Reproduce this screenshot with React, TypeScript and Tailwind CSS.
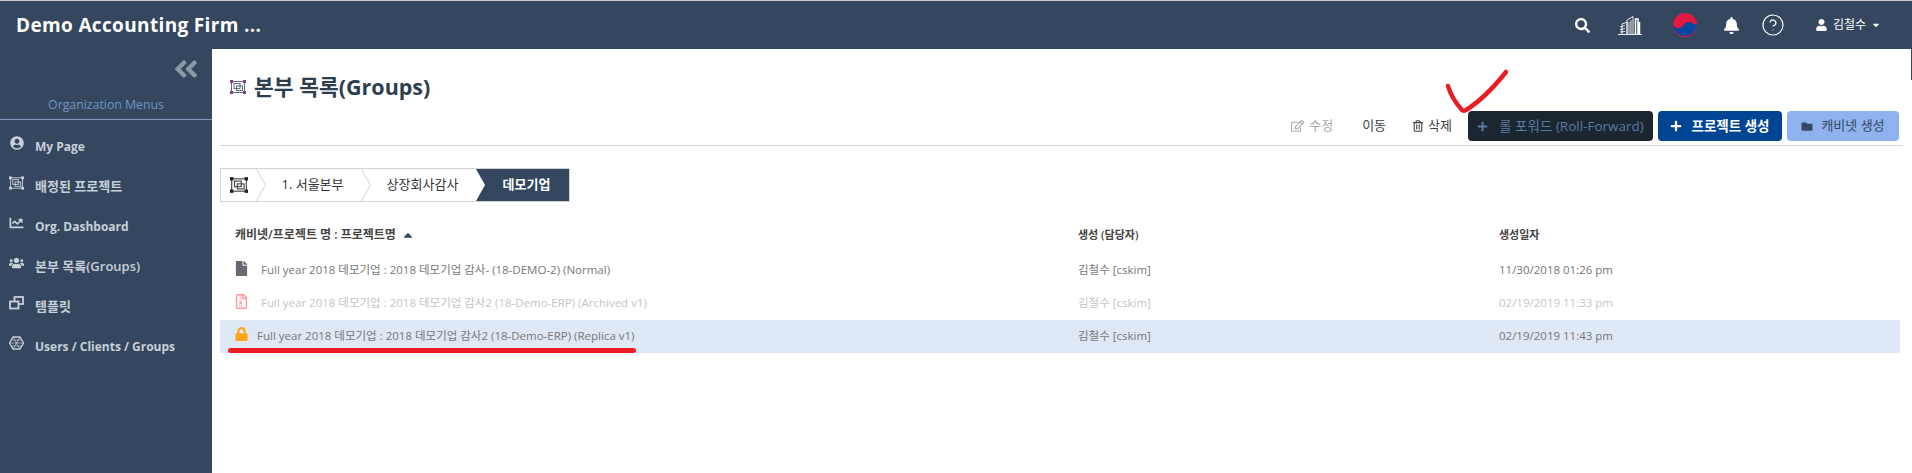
import { CircleHelp } from 'lucide-react'
import {
  FaAngleDoubleLeft,
  FaBell,
  FaCaretDown,
  FaCaretUp,
  FaChartLine,
  FaFile,
  FaFolder,
  FaLock,
  FaPlus,
  FaRegEdit,
  FaRegFileArchive,
  FaRegTrashAlt,
  FaSearch,
  FaUser,
  FaUserCircle,
  FaUsers,
} from 'react-icons/fa'

function GroupIcon({ className, handle, line }: { className: string; handle: string; line: string }) {
  return (
    <svg viewBox="0 0 16 14" className={className} fill="none">
      <rect x="1.5" y="1.5" width="13" height="11" stroke={line} strokeWidth="1" />
      <rect x="4" y="3.5" width="6" height="5" stroke={line} strokeWidth="1" />
      <rect x="6.5" y="6" width="6" height="4.5" stroke={line} strokeWidth="1" />
      {[[0, 0], [13, 0], [0, 11], [13, 11]].map(([x, y]) => (
        <rect key={`${x}-${y}`} x={x} y={y} width="3" height="3" fill={handle} />
      ))}
    </svg>
  )
}

function CloneIcon() {
  return (
    <svg viewBox="0 0 15 14" className="w-[15px] h-[14px]" fill="none" stroke="#c8d0d9" strokeWidth="1.8">
      <rect x="5.5" y="1" width="8.5" height="7" />
      <rect x="1" y="5.5" width="8.5" height="7" fill="#34475e" />
    </svg>
  )
}

function NetworkIcon() {
  return (
    <svg viewBox="0 0 15 14" className="w-[15px] h-[14px]" fill="none" stroke="#c8d0d9" strokeWidth="1">
      <path d="M4 1h7l3.500 6L11 13H4L.5 7z" strokeWidth="1.300" />
      <path d="M4 1l7 12M11 1L4 13M.5 7h14M2.500 4h10M2.500 10h10" strokeWidth=".7" />
    </svg>
  )
}

function BuildingIcon() {
  return (
    <svg viewBox="0 0 24 19" className="w-6 h-[19px]" fill="none" stroke="#fff" strokeWidth=".9">
      <path d="M0 18.500h24" />
      <path d="M4 18V8l5-2v12M2 11l5-1.500M2 13.500l5-1M2 16l5-.5" />
      <path d="M9 18V4l6-3.500V18" />
      <path d="M17.500 18V3h2.500v15M21.500 18V6" strokeWidth="1.500" />
      <path d="M11 6v12M13 4v14" />
    </svg>
  )
}

function KoreaFlag() {
  return (
    <svg viewBox="0 0 24 24" className="w-6 h-6">
      <circle cx="12" cy="12" r="12" fill="#e4173e" />
      <path d="M0 11c1 4 5 5 8 3.500s3.500-5 7-5.500c4-.5 5 3 9 2A12 12 0 1 1 0 11z" fill="#0a47a1" />
    </svg>
  )
}

function Chevron() {
  return (
    <svg viewBox="0 0 10 32" className="w-[10px] h-8 shrink-0" fill="none" stroke="#cfd3d8">
      <path d="M.5 0l9 16-9 16" />
    </svg>
  )
}

const MENU = [
  { label: 'My Page', text: 'text-[12px] font-bold', icon: <FaUserCircle className="w-[14px] h-[14px] text-[#c8d0d9]" /> },
  { label: '배정된 프로젝트', text: 'text-[13px] font-semibold', icon: <GroupIcon className="w-[15px] h-[14px]" handle="#c8d0d9" line="#c8d0d9" /> },
  { label: 'Org. Dashboard', text: 'text-[12px] font-bold', icon: <FaChartLine className="w-[15px] h-[14px] text-[#c8d0d9]" /> },
  { label: '본부 목록(Groups)', text: 'text-[13px] font-semibold', icon: <FaUsers className="w-[15px] h-[14px] text-[#c8d0d9]" /> },
  { label: '템플릿', text: 'text-[13px] font-semibold', icon: <CloneIcon /> },
  { label: 'Users / Clients / Groups', text: 'text-[12px] font-bold', icon: <NetworkIcon /> },
]

const ROWS = [
  {
    icon: <FaFile className="w-[13px] h-[15px] text-[#666a70]" />,
    name: 'Full year 2018 데모기업 : 2018 데모기업 감사- (18-DEMO-2) (Normal)',
    date: '11/30/2018 01:26 pm',
    tone: 'text-[#777]',
    box: 'h-[33px]',
    nameGap: 'ml-[13px]',
  },
  {
    icon: <FaRegFileArchive className="w-[13px] h-[15px] text-[#ff9a9a]" />,
    name: 'Full year 2018 데모기업 : 2018 데모기업 감사2 (18-Demo-ERP) (Archived v1)',
    date: '02/19/2019 11:33 pm',
    tone: 'text-[#c4c4c4]',
    box: 'h-[33px]',
    nameGap: 'ml-[13px]',
  },
  {
    icon: <FaLock className="w-[13px] h-[14px] text-[#ffa31a]" />,
    name: 'Full year 2018 데모기업 : 2018 데모기업 감사2 (18-Demo-ERP) (Replica v1)',
    date: '02/19/2019 11:43 pm',
    tone: 'text-[#777]',
    box: 'h-[33px] bg-[#dfe8f5]',
    nameGap: 'ml-[9px]',
  },
]

export default function App() {
  return (
    <div className="relative w-[1912px] h-[473px] overflow-hidden flex flex-col bg-white font-['Open_Sans','Noto_Sans_CJK_KR',sans-serif]">
      <header className="h-[49px] shrink-0 border-t border-[#c9c9c9] bg-[#34475e] flex items-center text-white">
        <div className="ml-4 text-[19px] font-bold tracking-[0.35px]">Demo Accounting Firm ...</div>
        <div className="ml-auto mr-[31px] flex items-center">
          <FaSearch className="w-[15px] h-[15px]" />
          <div className="ml-7"><BuildingIcon /></div>
          <div className="ml-[31px]"><KoreaFlag /></div>
          <FaBell className="ml-[27px] w-[15px] h-[17px]" />
          <CircleHelp className="ml-[22px] w-6 h-6" strokeWidth={1.200} />
          <FaUser className="ml-[31px] w-[11px] h-[12px]" />
          <span className="ml-[6px] text-[12px]">김철수</span>
          <FaCaretDown className="ml-[5px] w-[10px] h-[10px]" />
        </div>
      </header>

      <div className="flex flex-1 min-h-0">
        <aside className="w-[212px] shrink-0 bg-[#34475e]">
          <div className="h-[71px] border-b border-[#7f9ac0] flex flex-col">
            <div className="flex justify-end pr-[12px] pt-[6px]">
              <FaAngleDoubleLeft className="w-[28px] h-[28px] text-[#8d98a6]" />
            </div>
            <div className="mt-[13px] text-center text-[12.300px] text-[#7195c4]">Organization Menus</div>
          </div>
          <nav className="pt-[7px]">
            {MENU.map(item => (
              <div key={item.label} className="h-10 flex items-center">
                <div className="ml-[9px] w-[15px] -mt-2 flex justify-center">{item.icon}</div>
                <span className={`ml-[11px] text-[#c8d0d9] ${item.text}`}>{item.label}</span>
              </div>
            ))}
          </nav>
        </aside>

        <main className="flex-1 min-w-0 pl-2 pr-[9px]">
          <div className="flex items-center h-[62px] pl-[10px] pt-[14px]">
            <GroupIcon className="w-4 h-[14px]" handle="#7a3f9d" line="#5c6b7d" />
            <h1 className="ml-2 text-[21.500px] font-bold text-[#2c3e50]">본부 목록(Groups)</h1>
          </div>
          <div className="h-[35px] flex items-start justify-end pr-1 border-b border-[#ced4dc]">
            <div className="h-[30px] flex items-center text-[13px]">
              <span className="flex items-center text-[#a9a9a9]">
                <FaRegEdit className="w-[13px] h-[12px] mr-[5px]" />수정
              </span>
              <span className="ml-[29px] text-[#3a3f45]">이동</span>
              <span className="ml-[27px] flex items-center text-[#3a3f45]">
                <FaRegTrashAlt className="w-[10px] h-[12px] mr-[5px]" />삭제
              </span>
            </div>
            <button className="ml-4 w-[185px] h-[30px] rounded bg-[#1b2631] text-[#5a7ba5] text-[13.500px] flex items-center justify-center">
              <FaPlus className="w-[11px] h-[11px] mr-[11px]" />롤 포워드 (Roll-Forward)
            </button>
            <button className="ml-[5px] w-[124px] h-[30px] rounded bg-[#004494] text-white text-[13.500px] font-semibold flex items-center justify-center">
              <FaPlus className="w-3 h-3 mr-[9px]" />프로젝트 생성
            </button>
            <button className="ml-[5px] w-[112px] h-[30px] rounded bg-[#8fb2ee] text-[#34495f] text-[13px] flex items-center justify-center">
              <FaFolder className="w-3 h-[11px] mr-2" />캐비넷 생성
            </button>
          </div>

          <div className="mt-[22px] flex items-center w-[350px] h-[34px] border border-[#cfd3d8] text-[13px] text-[#333]">
            <div className="w-[35px] flex justify-center">
              <GroupIcon className="w-[18px] h-4" handle="#222" line="#444" />
            </div>
            <Chevron />
            <span className="w-[95px] text-center pr-[2px]">1. 서울본부</span>
            <Chevron />
            <span className="w-[105px] text-center pr-[2px]">상장회사감사</span>
            <div className="relative flex-1 h-full bg-[#34475e] flex items-center justify-center pl-2 font-bold text-white">
              <svg viewBox="0 0 9 32" className="absolute left-0 top-0 w-[9px] h-full" preserveAspectRatio="none">
                <path d="M0 0l9 16-9 16z" fill="#fff" />
              </svg>
              데모기업
            </div>
          </div>

          <div className="mt-4 w-[1680px]">
            <div className="grid grid-cols-[858px_421px_1fr] h-[34px] mb-[2px] items-center text-[11px] font-semibold text-[#444]">
              <div className="pl-[15px] flex items-center text-[12px]">
                캐비넷/프로젝트 명 : 프로젝트명
                <FaCaretUp className="ml-[5px] w-[14px] h-[14px] text-[#34475e]" />
              </div>
              <div>생성 (담당자)</div>
              <div>생성일자</div>
            </div>
            {ROWS.map(row => (
              <div key={row.date} className={`grid grid-cols-[858px_421px_1fr] items-center pb-[2px] text-[11.500px] ${row.box} ${row.tone}`}>
                <div className="pl-[15px] flex items-center">
                  <span className="-mt-[3px]">{row.icon}</span>
                  <span className={row.nameGap}>{row.name}</span>
                </div>
                <div>김철수 [cskim]</div>
                <div>{row.date}</div>
              </div>
            ))}
          </div>
        </main>
      </div>

      {/* pen marks drawn over the screenshot */}
      <svg viewBox="0 0 70 50" className="absolute left-[1444px] top-[68px] w-[70px] h-[50px]" fill="none">
        <path d="M4 18c2 7 6 15 14 24 1 1 2 1 4 0 13-8 28-23 40-38" stroke="#e81c24" strokeWidth="4.500" strokeLinecap="round" />
      </svg>
      <div className="absolute left-[228px] top-[348px] w-[408px] h-[5px] rounded-full bg-[#ed1c24]" />
      <div className="absolute right-0 top-[49px] w-px h-[31px] bg-[#34475e]" />
    </div>
  )
}
